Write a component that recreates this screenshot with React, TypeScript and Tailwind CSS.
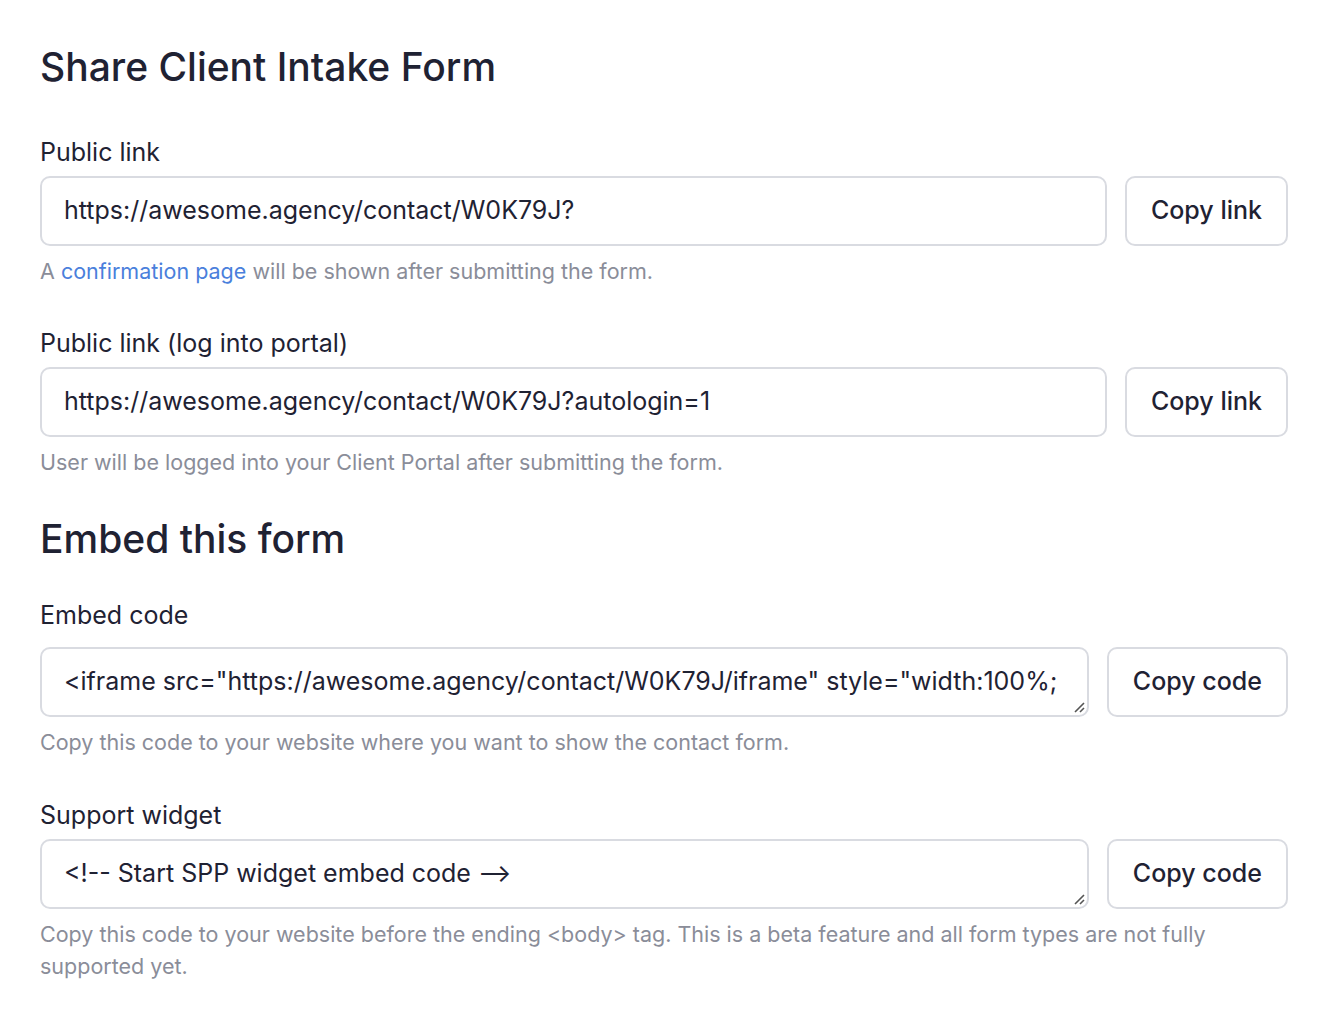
import React from 'react';

const Field = ({ label, value, btn, help, area, mt, lmb = 'mb-2' }: { label: string; value: string; btn: string; help: React.ReactNode; area?: boolean; mt: string; lmb?: string }) => (
  <div className={mt}>
    <div className={'text-[25px] leading-[32px] text-[#1f2233] ' + lmb}>{label}</div>
    <div className="flex gap-[18px] items-start">
      <div className="relative flex-1 min-w-0">
        <div className="h-[70px] border-2 border-[#d9dbe1] rounded-[10px] pl-[22px] pr-[28px] flex items-center text-[25px] text-[#1f2233] overflow-hidden [font-feature-settings:'calt'_0]">
          <span className="whitespace-nowrap overflow-hidden">{value}</span>
        </div>
        {area && (
          <svg className="absolute right-[4px] bottom-[4px]" width="14" height="14" viewBox="0 0 14 14">
            <path d="M13 4 L4 13 M13 9 L9 13" stroke="#555" strokeWidth="1.6" />
          </svg>
        )}
      </div>
      <button className="h-[70px] border-2 border-[#d9dbe1] rounded-[10px] px-[24px] text-[25px] font-medium text-[#1f2233] bg-white whitespace-nowrap">
        {btn}
      </button>
    </div>
    <div className="mt-[9px] text-[21.5px] leading-[32px] text-[#8a8d99]">{help}</div>
  </div>
);

export default function App() {
  return (
    <div className="bg-white min-h-[1016px] px-[40px] pt-[43px]" style={{ fontFamily: 'Inter, "Noto Sans", sans-serif' }}>
      <h1 className="text-[39px] leading-[48px] font-medium text-[#1f2233]">Share Client Intake Form</h1>
      <Field mt="mt-[45px]" label="Public link" value="https://awesome.agency/contact/W0K79J?" btn="Copy link"
        help={<>A <span className="text-[#4a7fdc]">confirmation page</span> will be shown after submitting the form.</>} />
      <Field mt="mt-[40px]" label="Public link (log into portal)" value="https://awesome.agency/contact/W0K79J?autologin=1" btn="Copy link"
        help="User will be logged into your Client Portal after submitting the form." />
      <h2 className="mt-[37px] text-[39px] leading-[48px] font-medium text-[#1f2233]">Embed this form</h2>
      <Field mt="mt-[36px]" lmb="mb-4" area label="Embed code" value={'<iframe src="https://awesome.agency/contact/W0K79J/iframe" style="width:100%;'} btn="Copy code"
        help="Copy this code to your website where you want to show the contact form." />
      <Field mt="mt-[41px]" area label="Support widget" value="<!-- Start SPP widget embed code -->" btn="Copy code"
        help="Copy this code to your website before the ending <body> tag. This is a beta feature and all form types are not fully supported yet." />
    </div>
  );
}
